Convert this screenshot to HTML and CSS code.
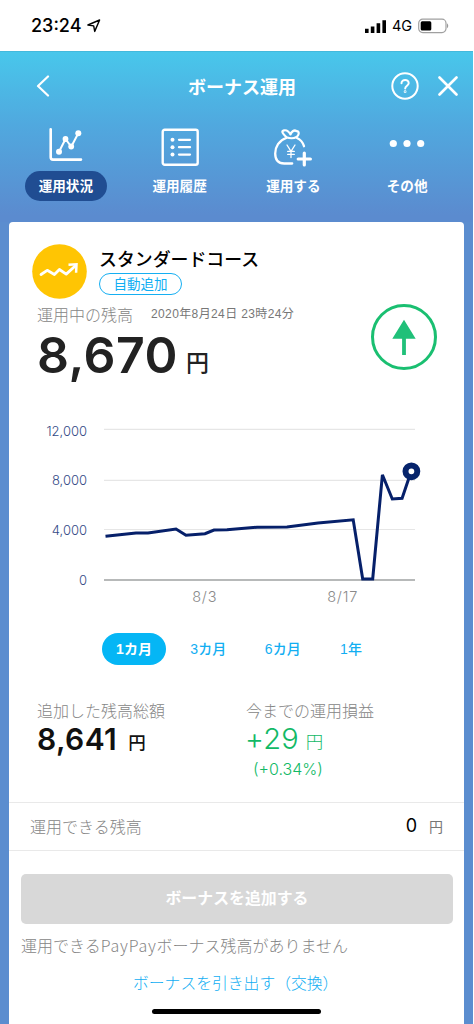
FILE: index.html
```html
<!DOCTYPE html>
<html lang="ja">
<head>
<meta charset="utf-8">
<meta name="viewport" content="width=device-width, initial-scale=1">
<title>ボーナス運用</title>
<link rel="stylesheet" href="styles.css">
</head>
<body>
<div class="screen">
  <div class="status">
    <span class="clock">23:24</span>
    <svg class="loc" width="14" height="14" viewBox="0 0 14 14"><path d="M.9 6 12.6 1 7.7 12.4 6.7 6.9Z" fill="none" stroke="#000" stroke-width="1.4" stroke-linejoin="round"/></svg>
    <svg class="signal" width="22" height="14" viewBox="0 0 22 14"><path d="M0 9.8h3.6V14H0zM5.8 7.4h3.6V14H5.8zM11.6 4.3h3.6V14h-3.6zM17.4 1.2H21V14h-3.6z"/></svg>
    <span class="net">4G</span>
    <svg class="battery" width="31" height="16" viewBox="0 0 31 16"><rect x=".7" y="1.2" width="27.3" height="13.4" rx="4" fill="none" stroke="#a0a0a0" stroke-width="1.2"/><rect x="2.7" y="3.2" width="10.6" height="9.4" rx="1.5"/><path d="M29 5.6c1.6.6 1.6 4 0 4.6z" fill="#999"/></svg>
  </div>
  <header class="header">
    <div class="nav">
      <svg class="back" width="14" height="22" viewBox="0 0 14 22"><path d="M12 1.5 2 11l10 9.5" fill="none" stroke="#fff" stroke-width="2.2" stroke-linecap="round" stroke-linejoin="round"/></svg>
      <h1 class="title">ボーナス運用</h1>
      <svg class="help" width="28" height="28" viewBox="0 0 28 28" fill="none" stroke="#fff" stroke-width="2" stroke-linecap="round"><circle cx="14" cy="14" r="12.7"/><path d="M10.5 11.3c0-4.6 7.4-4.4 7.2 0-.1 2.4-3.5 2.6-3.5 5.2"/><circle cx="14.1" cy="19.7" r=".4"/></svg>
      <svg class="close" width="20" height="20" viewBox="0 0 20 20"><path d="M1.5 1.5l17 17m0-17-17 17" stroke="#fff" stroke-width="2.6" stroke-linecap="round"/></svg>
    </div>
    <div class="tabs">
      <div class="tab active">
        <svg width="40" height="40" viewBox="0 0 40 40" fill="none" stroke="#fff" stroke-linecap="round" stroke-linejoin="round"><path d="M4.7 2.3v28q0 2.3 2.3 2.3h28" stroke-width="2.6"/><path d="M13 24.7 19.5 12l5.7 7.7L32.3 6.3" stroke-width="2"/><g fill="#fff" stroke="none"><circle cx="13" cy="24.7" r="3"/><circle cx="19.5" cy="12" r="2.9"/><circle cx="25.2" cy="19.5" r="2.9"/><circle cx="32.3" cy="6.3" r="3"/></g></svg>
        <span>運用状況</span>
      </div>
      <div class="tab">
        <svg width="40" height="40" viewBox="0 0 40 40" fill="none" stroke="#fff" stroke-linecap="round"><rect x="2.7" y="2.7" width="35" height="35" rx="2" stroke-width="2.4"/><path d="M19 12.8h11M19 20.2h11M19 27.6h11" stroke-width="2.3"/><g fill="#fff" stroke="none"><circle cx="12.5" cy="12.8" r="2"/><circle cx="12.5" cy="20.2" r="2"/><circle cx="12.5" cy="27.6" r="2"/></g></svg>
        <span>運用履歴</span>
      </div>
      <div class="tab">
        <svg width="40" height="40" viewBox="0 0 40 40" fill="none" stroke="#fff" stroke-linecap="round" stroke-linejoin="round"><path d="M13.3 11C6 13.4 2.2 20 2.2 26.5c0 6.6 3 10 9 10h8M24 11c3.6 1.5 6 5 7 8.2" stroke-width="2.3"/><path d="M13.5 10.3C8.5 5.5 8.5 4 11 3.4c3-.7 4.8 1 6.5 4 .5-2 3.5-5.3 6-3.2 3.3-.3 2.7 4.5-.5 6.1-2 1.2-6.5 1.2-9.5 0Z" stroke-width="2.2"/><path d="m14 18 4 6.3 4-6.3M18 24.3v6.2M14.7 24.4h6.6M14.7 27.4h6.6" stroke-width="1.3"/><path d="M31.3 26v12M25.2 32h12.2" stroke-width="3.2"/></svg>
        <span>運用する</span>
      </div>
      <div class="tab">
        <svg width="40" height="40" viewBox="0 0 40 40" fill="#fff"><circle cx="6.3" cy="16.5" r="3.6"/><circle cx="20" cy="16.5" r="3.6"/><circle cx="33.7" cy="16.5" r="3.6"/></svg>
        <span>その他</span>
      </div>
    </div>
  </header>
  <main class="card">
    <section class="course">
      <svg class="medal" width="55" height="55" viewBox="0 0 55 55"><circle cx="27.5" cy="27.5" r="27.3" fill="#ffc503"/><path d="m9 30.5 6.2-4.2 7.2 4.2 5-5 6.8 4.6 9.3-8.3" fill="none" stroke="#fff" stroke-width="2.8" stroke-linecap="round" stroke-linejoin="round"/><path d="m36.5 20.8 8-.5-.4 8.5" fill="none" stroke="#fff" stroke-width="2.5"/></svg>
      <div class="course-info">
        <h2 class="course-name">スタンダードコース</h2>
        <span class="badge">自動追加</span>
      </div>
    </section>
    <section class="balance">
      <div>
        <div class="meta"><span class="label">運用中の残高</span><time class="date">2020年8月24日 23時24分</time></div>
        <div class="amount"><span class="amount-num">8,670</span><span class="amount-yen">円</span></div>
      </div>
      <svg class="up" width="68" height="68" viewBox="0 0 68 68"><circle cx="34" cy="34" r="31.5" fill="none" stroke="#1abf71" stroke-width="3"/><path d="M34 16.8 45.7 35.8H35.9V52h-3.8V35.8H22.3Z" fill="#20c079"/></svg>
    </section>
    <svg class="chart" width="455" height="200" viewBox="9 414 455 200">
      <g fill="none" stroke="#e6e6e6" stroke-width="1.2"><path d="M104 429.3h311M104 480.4h311M104 529.5h311"/></g>
      <path d="M104 580h311" stroke="#b7b9b9" stroke-width="1.8"/>
      <g class="y-axis"><text x="87" y="435.6">12,000</text><text x="87" y="485">8,000</text><text x="87" y="535">4,000</text><text x="87" y="585.4">0</text></g>
      <g class="x-axis"><text x="204.7" y="602.2">8/3</text><text x="342.6" y="602.2">8/17</text></g>
      <path d="M105.5 536.2 136 533h12L176 529l10 6.3 19-1.6 9-3.7 13-.3L257 527.2l30-.1L318 523l35.2-3.2 9.5 59.2h10L382.4 474.8 392.3 499l9.8-.7L411.3 471" fill="none" stroke="#06206a" stroke-width="3"/>
      <circle cx="411.4" cy="471.3" r="5.9" fill="#fff" stroke="#06246c" stroke-width="6"/>
    </svg>
    <div class="periods"><span class="period selected">1カ月</span><span class="period">3カ月</span><span class="period">6カ月</span><span class="period year">1年</span></div>
    <section class="stats">
      <div class="stat">
        <div class="label">追加した残高総額</div>
        <div class="value"><b class="num">8,641</b><b class="yen">円</b></div>
      </div>
      <div class="stat gain">
        <div class="label">今までの運用損益</div>
        <div class="value"><span class="num">+29</span><span class="yen">円</span></div>
        <div class="rate">(+0.34%)</div>
      </div>
    </section>
    <section class="available"><span class="label">運用できる残高</span><span class="zero">0</span><span class="zero-yen">円</span></section>
    <section class="actions">
      <button class="add">ボーナスを追加する</button>
      <p class="note label">運用できる<span class="latin">PayPay</span>ボーナス残高がありません</p>
      <a class="withdraw">ボーナスを引き出す（交換）</a>
      <div class="home-bar"></div>
    </section>
  </main>
</div>
</body>
</html>
```
FILE: styles.css
```css
* { box-sizing: border-box; }
body { margin: 0; background: #fff; font-family: "Liberation Sans", "Noto Sans CJK JP", sans-serif; white-space: nowrap; }
h1, h2, p { margin: 0; }
svg { display: block; flex: none; }
.screen { width: 473px; height: 1024px; overflow: hidden; background: #5b8dcf; }

.status { display: flex; align-items: center; height: 51px; padding: 1px 23px 0 31px; background: #fff; }
.clock { font: 500 18px/24px Inter, sans-serif; width: 51px; letter-spacing: 0; }
.loc { margin-left: 5px; }
.signal { margin-left: auto; }
.net { width: 21px; margin-left: 5px; font: 400 14.5px/20px Inter, sans-serif; }
.battery { margin-left: 5px; margin-right: 1px; }

.header { height: 171px; background: linear-gradient(#48c7eb, #50a9df 42%, #5b8bcf 96%); border-top: 1px solid #43b9dc; color: #fff; }
.nav { display: flex; align-items: center; height: 71px; padding: 0 15px 3px 36px; }
.title { flex: 1; padding-left: 138px; font: 700 18px/28px "Noto Sans CJK JP", sans-serif; }
.help { margin-right: 19px; }
.tabs { display: grid; grid-template-columns: repeat(4, 1fr); padding: 4px 9px 0; }
.tab { display: flex; flex-direction: column; align-items: center; gap: 4px; font: 700 13.6px/29px "Noto Sans CJK JP", sans-serif; }
.tab span { height: 30px; padding: 0 14px; border-radius: 15px; }
.tab.active span { background: #204d92; }

.card { width: 455px; height: 802px; margin-left: 9px; background: #fff; border-radius: 4px 4px 0 0; padding-top: 22px; }
.course { display: flex; height: 57px; padding-left: 23px; gap: 12px; }
.course-name { font: 500 17.9px/28px "Noto Sans CJK JP", sans-serif; color: #000; }
.badge { display: block; width: 83px; height: 22px; margin-top: 1px; border: 1.3px solid #16aff2; border-radius: 11px; font: 400 13.5px/19px "Noto Sans CJK JP", sans-serif; color: #10aef3; text-align: center; }
.balance { display: flex; justify-content: space-between; height: 113px; padding: 0 26px 0 28px; }
.up { margin-top: 2px; }
.label { font: 300 16px/24px "Noto Sans CJK JP", sans-serif; color: #858585; }
.meta { display: flex; align-items: center; height: 26px; gap: 18px; }
.date { font: 400 12px/24px "Liberation Sans", "Noto Sans CJK JP", sans-serif; letter-spacing: .38px; color: #777; }
.amount { display: flex; align-items: baseline; margin-top: -2px; color: #222; }
.amount-num { font: 600 50px/60px Inter, sans-serif; letter-spacing: .5px; }
.amount-yen { margin-left: 8px; font: 500 23px/30px "Noto Sans CJK JP", sans-serif; transform: translateY(-2px); }
.y-axis { font: 300 13px Inter, sans-serif; fill: #334a86; text-anchor: end; }
.x-axis { font: 300 14.5px Inter, sans-serif; fill: #8a8a8a; text-anchor: middle; letter-spacing: .8px; }
.periods { display: flex; align-items: center; height: 32px; margin-top: 19px; padding-left: 93px; color: #12aef2; font: 500 14px/32px "Liberation Sans", "Noto Sans CJK JP", sans-serif; }
.period { width: 74.5px; text-align: center; }
.period.year { width: 62px; }
.period.selected { width: 64px; margin-right: 5px; border-radius: 16px; background: #05b6f5; color: #fff; font-weight: 700; }
.stats { display: grid; grid-template-columns: 209px 1fr; height: 137px; padding: 33px 0 0 28px; }
.value { display: flex; align-items: baseline; height: 35px; margin-top: -1px; color: #111; }
.num { font: 600 30px/36px Inter, sans-serif; letter-spacing: .4px; }
.yen { margin-left: 11px; font: 500 17.5px/24px "Noto Sans CJK JP", sans-serif; transform: translateY(-1px); }
.gain .value, .rate { color: #12b966; }
.gain .num { font-size: 29px; font-weight: 300; margin-left: -1px; letter-spacing: .2px; }
.gain .yen { margin-left: 7px; font-weight: 300; }
.rate { padding-left: 7px; font: 300 16px/26px Inter, sans-serif; }
.available { display: flex; align-items: center; height: 49px; padding: 0 21px 2px; border: solid #e9e9e9; border-width: 1px 0; }
.zero { margin-left: auto; font: 400 18px/24px Inter, sans-serif; }
.zero-yen { margin-left: 12px; font: 400 14px/24px "Noto Sans CJK JP", sans-serif; color: #777; }
.actions { display: flex; flex-direction: column; padding: 23px 11px 0 12px; }
.add { height: 50px; padding-bottom: 3px; border: 0; border-radius: 5px; background: #d8d8d8; color: #fff; font: 700 15.9px/24px "Noto Sans CJK JP", sans-serif; }
.note { margin-top: 9px; }
.latin { letter-spacing: .8px; }
.withdraw { margin: 14px 0 0 112px; font: 300 15.8px/24px "Noto Sans CJK JP", sans-serif; color: #10aef3; }
.home-bar { width: 169px; height: 5px; margin: 14px 0 0 131px; border-radius: 3px; background: #000; }
```
